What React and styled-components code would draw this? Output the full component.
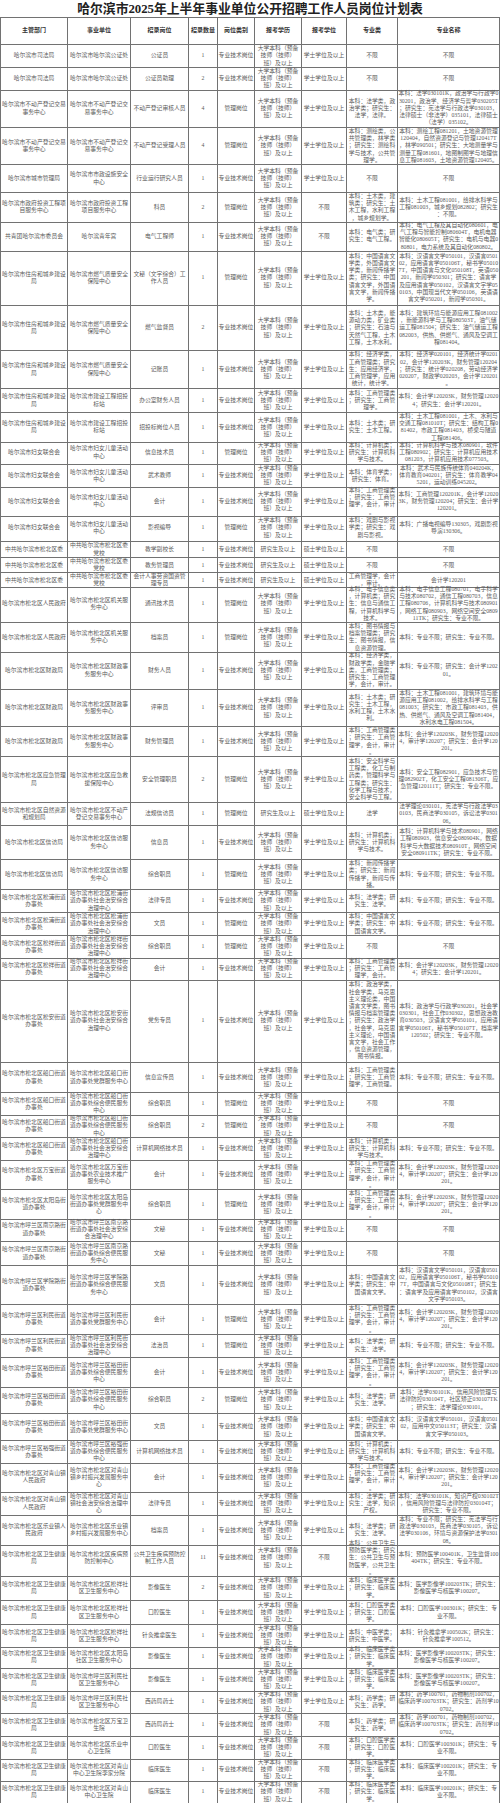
import React from 'react';
import styled, { createGlobalStyle } from 'styled-components';

const GlobalStyle = createGlobalStyle`
  html,
  body {
    margin: 0;
    padding: 0;
    background: #fff;
  }
  body {
    font-family: 'Liberation Serif', 'Noto Sans CJK SC', serif;
  }
`;

const COLS = '67px 63px 58px 29px 37px 47px 45px 51px 102px';
const LINE = '#727272';

const Page = styled.div`
  width: 500px;
  height: 1803px;
  overflow: hidden;
  background: #fff;
`;

const Title = styled.h1`
  margin: 0;
  height: 17px;
  line-height: 18px;
  text-align: center;
  font-size: 12.8px;
  font-weight: 700;
  color: #222;
  white-space: nowrap;
`;

const Sheet = styled.div`
  width: 499px;
  border-left: 1px solid ${LINE};
  border-top: 1px solid ${LINE};
`;

const Row = styled.div`
  display: grid;
  grid-template-columns: ${COLS};
  height: ${props => props.$h}px;
`;

const Cell = styled.div`
  display: flex;
  align-items: center;
  justify-content: center;
  min-width: 0;
  box-sizing: border-box;
  border-right: 1px solid ${LINE};
  border-bottom: 1px solid ${LINE};
  padding: 0;
  text-align: center;
  white-space: pre-line;
  word-break: break-all;
  line-break: anywhere;
  font-size: ${props => (props.$head ? 6 : 5.8)}px;
  font-weight: ${props => (props.$head ? 700 : 400)};
  line-height: 7.2px;
  color: ${props => (props.$head ? '#333' : '#5a5a5a')};
`;

const E1 = '大学本科（预备\n技师（技师）\n班）及以上';
const E2 = '研究生及以上';
const BS = '学士学位及以上';
const MS = '硕士学位及以上';
const NL = '不限';
const TECH = '专业技术岗位';
const MGMT = '管理岗位';

const HEAD = ['主管部门', '事业单位', '招录岗位', '招录数量', '岗位类别', '报考学历', '报考学位', '专业类', '专业名称'];

const ACC_CLS = '本科：工商管理类；研究生：工商管理学，会计，审计。';
const ACC_NAME = '本科：会计学120203K，财务管理120204，审计学120207；研究生：会计学120201。';
const ANY = '本科：专业不限；研究生：专业不限。';
const CLIN_CLS = '本科：临床医学类；研究生：临床医学。';
const IMG_NAME = '本科：医学影像学100203TK；研究生：影像医学与核医学100207。';
const PHARM_CLS = '本科：药学类；研究生：药学。';
const PHARM_NAME = '本科：药学100701，药物制剂100702，临床药学100703TK；研究生：药剂学100702。';
const ORAL_CLS = '本科：口腔医学类；研究生：口腔医学。';
const ORAL_NAME = '本科：口腔医学100301K；研究生：专业不限。';
const CLIN_NAME = '本科：临床医学100201K；研究生：专业不限。';
const HEALTH = '哈尔滨市松北区卫生健康局';

// [height, 主管部门, 事业单位, 招录岗位, 数量, 类别, 学历, 学位, 专业类, 专业名称]
const rows = [
  [23, '哈尔滨市司法局', '哈尔滨市哈尔滨公证处', '公证员', '1', TECH, E1, BS, NL, NL],
  [22, '哈尔滨市司法局', '哈尔滨市哈尔滨公证处', '公证员助理', '2', TECH, E1, BS, NL, NL],
  [38, '哈尔滨市不动产登记交易事务中心', '哈尔滨市不动产登记交易事务中心', '不动产登记审核人员', '4', MGMT, E1, BS,
    '本科：法学类，政治学类；研究生：法学，法律。',
    '本科：法学030101K，政治学与行政学030201，政治学、经济学与哲学030205T；研究生：宪法学与行政法学030103，法律硕士（非法学）035101，法律硕士（法学）035102。'],
  [37, '哈尔滨市不动产登记交易事务中心', '哈尔滨市不动产登记交易事务中心', '不动产登记受理人员', '4', MGMT, E1, BS,
    '本科：测绘类，公共管理类，林学类；研究生：测绘科学与技术，公共管理学。',
    '本科：测绘工程081201，土地资源管理120404，自然资源登记与管理120417T，林学090501；研究生：大地测量学与测量工程081601，地图制图学与地理信息工程081603，土地资源管理120405。'],
  [28, '哈尔滨市城市管理局', '哈尔滨市市政设施安全中心', '行业运行研究人员', '1', TECH, E1, BS, NL, NL],
  [29, '哈尔滨市政府投资工程项目服务中心', '哈尔滨市政府投资工程项目服务中心', '科员', '2', MGMT, E1, NL,
    '本科：土木类，建筑类；研究生：土木工程，水利工程，城乡规划学。',
    '本科：土木工程081001，给排水科学与工程081003，城乡规划082802；研究生：不限。'],
  [29, '共青团哈尔滨市委员会', '哈尔滨青年宫', '电气工程师', '1', TECH, E1, NL,
    '本科：电气类；研究生：电气工程。',
    '本科：电气工程及其自动化080601，电气工程与智能控制080604T，电机电器智能化080605T；研究生：电机与电器080801，电力系统及其自动化080802。'],
  [55, '哈尔滨市住房和城乡建设局', '哈尔滨市燃气质量安全保障中心', '文秘（文字综合）工作人员', '1', MGMT, E1, BS,
    '本科：中国语言文学类，外国语言文学类，新闻传播学类；研究生：中国语言文学，外国语言文学，新闻传播学。',
    '本科：汉语言文学050101，汉语言050102，应用语言学050106T，秘书学050107T，中国语言与文化050108T，英语050201，新闻学050301；研究生：语言学及应用语言学050102，汉语言文字学050103，中国现当代文学050106，英语语言文学050201，新闻学050301。'],
  [45, '哈尔滨市住房和城乡建设局', '哈尔滨市燃气质量安全保障中心', '燃气监督员', '2', TECH, E1, BS,
    '本科：土木类，能源动力类，矿业类；研究生：石油与天然气工程，土木工程，土木水利。',
    '本科：建筑环境与能源应用工程081002，新能源科学与工程080503T，油气储运工程081504；研究生：油气储运工程082003，供热、供燃气、通风及空调工程081404。'],
  [38, '哈尔滨市住房和城乡建设局', '哈尔滨市燃气质量安全保障中心', '记账员', '1', TECH, E1, BS,
    '本科：经济学类，工商管理类；研究生：应用经济学，工商管理学，应用统计，统计学。',
    '本科：经济学020101，经济统计学020102，会计学120203K，财务管理120204；研究生：统计学020208，劳动经济学020207，财政学020203，会计学120201。'],
  [24, '哈尔滨市住房和城乡建设局', '哈尔滨市建设工程招投标站', '办公室财务人员', '1', TECH, E1, BS,
    '本科：工商管理类；研究生：工商管理学。',
    '本科：会计学120203K，财务管理120204；研究生：会计学120201。'],
  [28, '哈尔滨市住房和城乡建设局', '哈尔滨市建设工程招投标站', '招投标岗位人员', '1', TECH, E1, BS,
    '本科：土木类；研究生：土木工程。',
    '本科：土木工程081001，土木、水利与交通工程081010T；研究生：结构工程081402，市政工程081403，桥梁与隧道工程081406。'],
  [24, '哈尔滨市妇女联合会', '哈尔滨市妇女儿童活动中心', '信息技术员', '1', MGMT, E1, BS,
    '本科：计算机类；研究生：计算机科学与技术。',
    '本科：计算机科学与技术080901，软件工程080902；研究生：计算机应用技术081203，计算机应用技术077503。'],
  [22, '哈尔滨市妇女联合会', '哈尔滨市妇女儿童活动中心', '武术教师', '1', TECH, E1, BS,
    '本科：体育学类；研究生：体育。',
    '本科：武术与民族传统体育040204K，体育教育040201；研究生：体育教学045201，运动训练045202。'],
  [28, '哈尔滨市妇女联合会', '哈尔滨市妇女儿童活动中心', '会计', '1', TECH, E1, BS,
    '本科：工商管理类；研究生：工商管理学，会计，审计。',
    '本科：工商管理120201K，会计学120203K，财务管理120204；研究生：会计学120201。'],
  [27, '哈尔滨市妇女联合会', '哈尔滨市妇女儿童活动中心', '影视编导', '1', MGMT, E1, BS,
    '本科：戏剧与影视学类；研究生：戏剧与影视。',
    '本科：广播电视编导130305，戏剧影视导演130306。'],
  [16, '中共哈尔滨市松北区委', '中共哈尔滨市松北区委党校', '教学副校长', '1', TECH, E2, MS, NL, NL],
  [15, '中共哈尔滨市松北区委', '中共哈尔滨市松北区委党校', '教务管理员', '1', TECH, E2, MS, NL, NL],
  [13, '中共哈尔滨市松北区委', '中共哈尔滨市松北区委党校', '会计人事劳资国资管理专员', '1', TECH, E2, MS,
    '工商管理学，会计，审计。', '会计学120201'],
  [37, '哈尔滨市松北区人民政府', '哈尔滨市松北区机关服务中心', '通讯技术员', '1', MGMT, E1, BS,
    '本科：电子信息类，计算机类；研究生：信息与通信工程，计算机科学与技术。',
    '本科：电子信息工程080701，电子科学与技术080702，通信工程080703，信息工程080706，计算机科学与技术080901，网络工程080903，网络空间安全080911TK；研究生：专业不限。'],
  [29, '哈尔滨市松北区人民政府', '哈尔滨市松北区机关服务中心', '档案员', '1', MGMT, E1, BS,
    '本科：图书情报与档案管理类；研究生：图书情报，信息资源管理。', ANY],
  [38, '哈尔滨市松北区财政局', '哈尔滨市松北区财政事务服务中心', '财务人员', '1', TECH, E1, BS,
    '本科：经济学类，财政学类，金融学类，工商管理类；研究生：工商管理学，会计，审计。',
    '本科：专业不限；研究生：会计学120201。'],
  [37, '哈尔滨市松北区财政局', '哈尔滨市松北区财政事务服务中心', '评审员', '1', TECH, E1, BS,
    '本科：土木类；研究生：土木工程，水利工程，土木水利。',
    '本科：土木工程081001，建筑环境与能源应用工程081002，给排水科学与工程081003；研究生：市政工程081403，供热、供燃气、通风及空调工程081404，水利水电工程081504。'],
  [30, '哈尔滨市松北区财政局', '哈尔滨市松北区财政事务服务中心', '财务管理员', '1', TECH, E1, BS, ACC_CLS, ACC_NAME],
  [46, '哈尔滨市松北区应急管理局', '哈尔滨市松北区应急救援保障中心', '安全管理职员', '2', MGMT, E1, BS,
    '本科：安全科学与工程类，化工与制药类，管理科学与工程类；研究生：化学工程与技术，安全科学与工程。',
    '本科：安全工程082901，应急技术与管理082902T，化工安全工程081306T，应急管理120111T；研究生：专业不限。'],
  [23, '哈尔滨市松北区自然资源和规划局', '哈尔滨市松北区不动产登记交易事务中心', '法规信访员', '1', MGMT, E2, MS,
    '法学', '法学理论030101，宪法学与行政法学030103，民商法学030105，诉讼法学030106。'],
  [34, '哈尔滨市松北区信访局', '哈尔滨市松北区信访服务中心', '信息员', '1', TECH, E1, BS,
    '本科：计算机类；研究生：计算机科学与技术。',
    '本科：计算机科学与技术080901，网络工程080903，信息安全080904K，数据科学与大数据技术080910T，网络空间安全080911TK；研究生：专业不限。'],
  [30, '哈尔滨市松北区信访局', '哈尔滨市松北区信访服务中心', '综合职员', '1', MGMT, E1, BS,
    '本科：新闻传播学类；研究生：新闻传播学，新闻与传播。', ANY],
  [23, '哈尔滨市松北区松浦街道办事处', '哈尔滨市松北区松浦街道办事处社会治安综合治理中心', '法律专员', '1', TECH, E1, BS,
    '本科：法学类；研究生：法学。', ANY],
  [23, '哈尔滨市松北区松浦街道办事处', '哈尔滨市松北区松浦街道办事处社会治安综合治理中心', '文员', '1', MGMT, E1, BS,
    '本科：中国语言文学类；研究生：中国语言文学。', ANY],
  [22, '哈尔滨市松北区松祥街道办事处', '哈尔滨市松北区松祥街道办事处社会治安综合治理中心', '综合职员', '1', MGMT, E1, BS, NL, NL],
  [22, '哈尔滨市松北区松祥街道办事处', '哈尔滨市松北区松祥街道办事处社会治安综合治理中心', '会计', '1', TECH, E1, BS,
    '本科：工商管理类；研究生：工商管理学，会计。',
    '本科：会计学120203K，财务管理120204；研究生：会计学120201。'],
  [83, '哈尔滨市松北区松安街道办事处', '哈尔滨市松北区松安街道办事处社会治安综合治理中心', '党务专员', '1', TECH, E1, BS,
    '本科：政治学类，社会学类，马克思主义理论类，中国语言文学类，图书情报与档案管理类；研究生：政治学，社会学，马克思主义理论，中国语言文学，社会工作，信息资源管理，图书情报。',
    '本科：政治学与行政学030201，社会学030301，社会工作030302，思想政治教育030503，汉语言文学050101，应用语言学050106T，秘书学050107T，档案学120502；研究生：专业不限。'],
  [30, '哈尔滨市松北区船口街道办事处', '哈尔滨市松北区船口街道办事处党群服务中心', '信息宣传员', '1', TECH, E1, BS,
    '本科：工商管理类；研究生：工商管理学，工商管理。', ANY],
  [22, '哈尔滨市松北区船口街道办事处', '哈尔滨市松北区船口街道办事处综合便民服务中心', '综合职员', '1', MGMT, E1, BS, NL, NL],
  [23, '哈尔滨市松北区船口街道办事处', '哈尔滨市松北区船口街道办事处综合便民服务中心', '综合职员', '2', MGMT, E1, BS, NL, NL],
  [22, '哈尔滨市松北区船口街道办事处', '哈尔滨市松北区船口街道办事处社会治安综合治理中心', '计算机网络技术员', '1', TECH, E1, BS,
    '本科：计算机类；研究生：计算机科学与技术。', ANY],
  [30, '哈尔滨市松北区万宝街道办事处', '哈尔滨市松北区万宝街道办事处农业技术推广服务中心', '会计', '1', TECH, E1, BS, ACC_CLS, ACC_NAME],
  [28, '哈尔滨市松北区太阳岛街道办事处', '哈尔滨市松北区太阳岛街道办事处党群服务中心', '综合职员', '1', MGMT, E1, BS, ACC_CLS, ACC_NAME],
  [24, '哈尔滨市呼兰区南京路街道办事处', '哈尔滨市呼兰区南京路街道办事处社会治安综合治理中心', '文秘', '1', TECH, E1, BS, NL, NL],
  [24, '哈尔滨市呼兰区南京路街道办事处', '哈尔滨市呼兰区南京路街道办事处综合便民服务中心', '文秘', '1', TECH, E1, BS, NL, NL],
  [39, '哈尔滨市呼兰区学院路街道办事处', '哈尔滨市呼兰区学院路街道办事处综合便民服务中心', '文员', '1', TECH, E1, BS,
    '本科：中国语言文学类；研究生：中国语言文学。',
    '本科：汉语言文学050101，汉语言050102，应用语言学050106T，秘书学050107T，中国语言与文化050108T；研究生：语言学及应用语言学050102，汉语言文字学050103。'],
  [29, '哈尔滨市呼兰区利民街道办事处', '哈尔滨市呼兰区利民街道办事处党群服务中心', '会计', '1', MGMT, E1, BS, ACC_CLS, ACC_NAME],
  [24, '哈尔滨市呼兰区利民街道办事处', '哈尔滨市呼兰区利民街道办事处社会治安综合治理中心', '法治员', '1', MGMT, E1, BS,
    '本科：法学类；研究生：法学。', ANY],
  [29, '哈尔滨市呼兰区裕田街道办事处', '哈尔滨市呼兰区裕田街道办事处综合便民服务中心', '会计', '1', TECH, E1, BS, ACC_CLS, ACC_NAME],
  [27, '哈尔滨市呼兰区裕田街道办事处', '哈尔滨市呼兰区裕田街道办事处综合便民服务中心', '综合职员', '2', MGMT, E1, BS,
    '本科：法学类；研究生：法学。',
    '本科：法学030101K，信用风险管理与法律防控030104T，社区矫正030107TK；研究生：法学理论030101。'],
  [27, '哈尔滨市呼兰区裕田街道办事处', '哈尔滨市呼兰区裕田街道办事处党群服务中心', '文员', '1', TECH, E1, BS,
    '本科：中国语言文学类；研究生：中国语言文学。',
    '本科：汉语言文学050101，汉语言050102，应用中文050113T；研究生：汉语言文字学050103。'],
  [22, '哈尔滨市呼兰区裕强街道办事处', '哈尔滨市呼兰区裕强街道办事处综合便民服务中心', '计算机网络技术员', '1', TECH, E1, BS,
    '本科：计算机类；研究生：计算机科学与技术。', ANY],
  [29, '哈尔滨市松北区对青山镇人民政府', '哈尔滨市松北区对青山镇乡村振兴发展服务中心', '会计', '1', TECH, E1, BS, ACC_CLS, ACC_NAME],
  [24, '哈尔滨市松北区对青山镇人民政府', '哈尔滨市松北区对青山镇社会治安综合治理中心', '法律专员', '1', TECH, E1, BS,
    '本科：法学类；研究生：法学，知识产权。',
    '本科：法学030101K，知识产权030102T，信用风险管理与法律防控030104T；研究生：专业不限。'],
  [24, '哈尔滨市松北区乐业镇人民政府', '哈尔滨市松北区乐业镇乡村振兴发展服务中心', '档案员', '1', TECH, E1, BS,
    '本科：法学类；研究生：法学。',
    '本科：专业不限；研究生：宪法学与行政法学030103，民商法学030105，诉讼法学030106，环境与资源保护法学030108。'],
  [36, HEALTH, '哈尔滨市松北区疾病预防控制中心', '公共卫生疾病预防控制工作人员', '11', TECH, E1, NL,
    '本科：公共卫生与预防医学类；研究生：公共卫生与预防医学，公共卫生。',
    '本科：预防医学100401K，卫生监督100404TK；研究生：专业不限。'],
  [25, HEALTH, '哈尔滨市松北区松祥社区卫生服务中心', '影像医生', '2', TECH, E1, BS, CLIN_CLS, IMG_NAME],
  [24, HEALTH, '哈尔滨市松北区松祥社区卫生服务中心', '口腔医生', '1', TECH, E1, BS, ORAL_CLS, ORAL_NAME],
  [21, HEALTH, '哈尔滨市松北区松祥社区卫生服务中心', '针灸推拿医生', '1', TECH, E1, BS,
    '本科：中医学类；研究生：中医学。',
    '本科：针灸推拿学100502K；研究生：针灸推拿学100512。'],
  [23, HEALTH, '哈尔滨市松北区太阳岛社区卫生服务中心', '影像医生', '1', TECH, E1, BS, CLIN_CLS, IMG_NAME],
  [22, HEALTH, '哈尔滨市呼兰区利民社区卫生服务中心', '影像医生', '1', TECH, E1, BS, CLIN_CLS, IMG_NAME],
  [23, HEALTH, '哈尔滨市呼兰区利民社区卫生服务中心', '西药局药士', '1', TECH, E1, BS, PHARM_CLS, PHARM_NAME],
  [23, HEALTH, '哈尔滨市松北区万宝卫生院', '西药局药士', '1', TECH, E1, NL, PHARM_CLS, PHARM_NAME],
  [22, HEALTH, '哈尔滨市松北区乐业中心卫生院', '口腔医生', '1', TECH, E1, NL, ORAL_CLS, ORAL_NAME],
  [22, HEALTH, '哈尔滨市松北区对青山中心卫生院李家分院', '临床医生', '1', TECH, E1, NL, CLIN_CLS, CLIN_NAME],
  [23, HEALTH, '哈尔滨市松北区对青山中心卫生院', '临床医生', '1', TECH, E1, NL, CLIN_CLS, CLIN_NAME]
];

function PlanRow({ height, cells, head }) {
  return (
    <Row $h={height}>
      {cells.map((text, i) => (
        <Cell key={i} $head={head}>
          {text}
        </Cell>
      ))}
    </Row>
  );
}

export default function App() {
  return (
    <Page>
      <GlobalStyle />
      <Title>哈尔滨市2025年上半年事业单位公开招聘工作人员岗位计划表</Title>
      <Sheet>
        <PlanRow height={27} cells={HEAD} head />
        {rows.map(([h, ...cells], i) => (
          <PlanRow key={i} height={h} cells={cells} />
        ))}
      </Sheet>
    </Page>
  );
}
